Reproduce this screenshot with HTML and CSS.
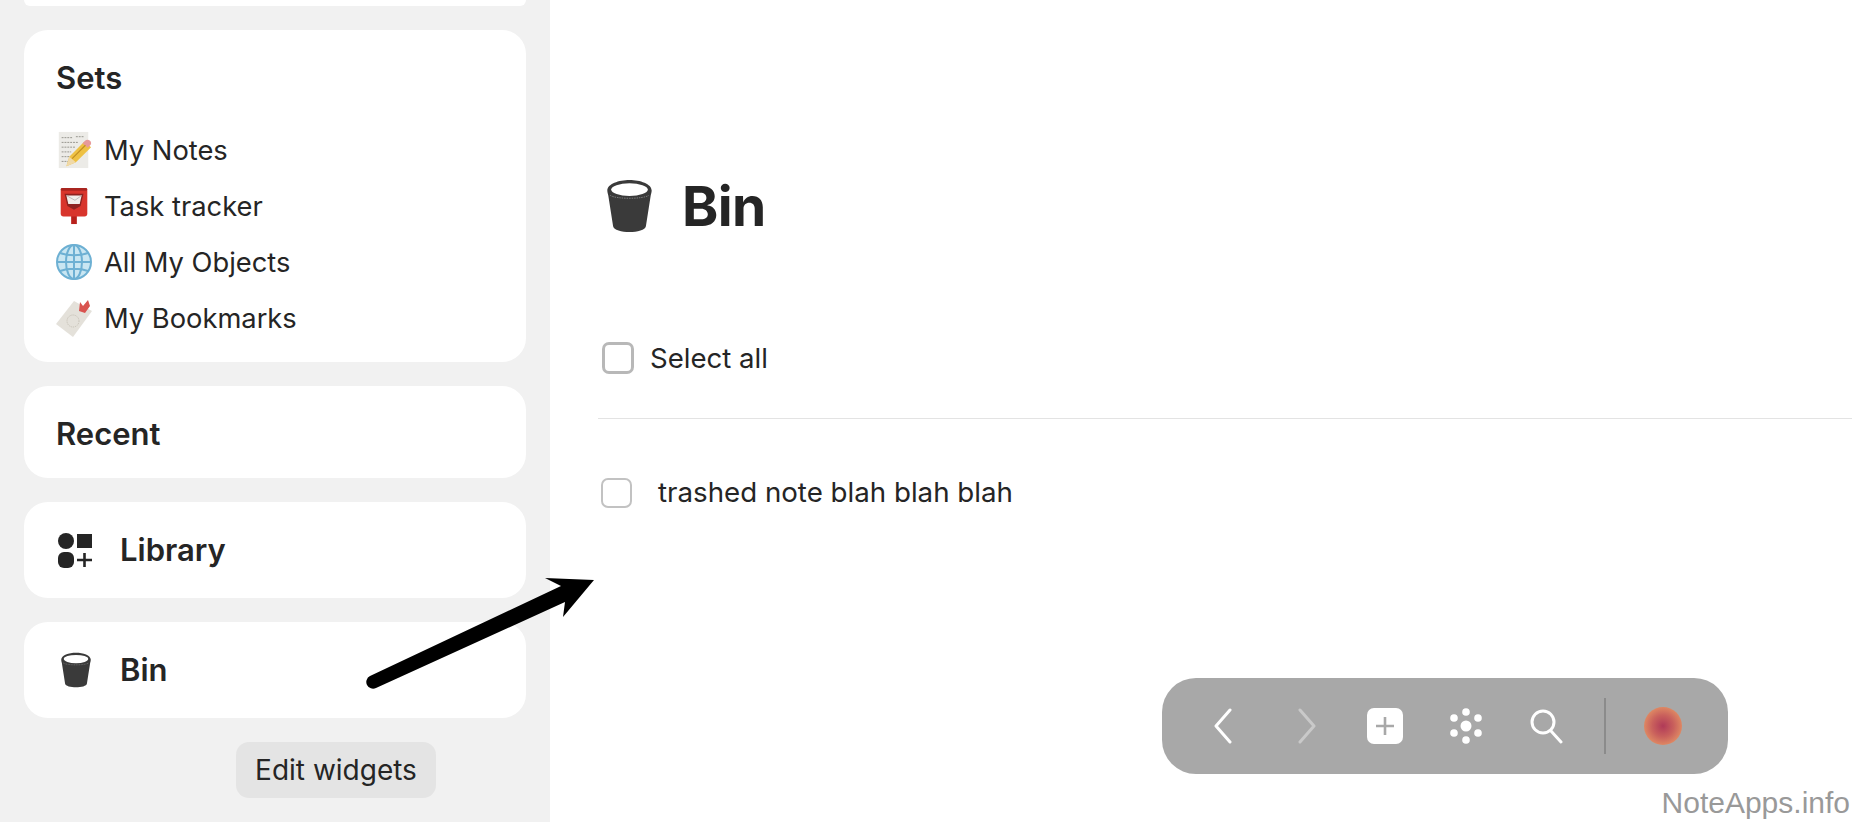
FILE: index.html
```html
<!DOCTYPE html>
<html lang="en">
<head>
<meta charset="utf-8">
<title>Bin</title>
<link rel="stylesheet" href="styles.css">
</head>
<body>
<svg class="defs" width="0" height="0" aria-hidden="true">
  <symbol id="bin" viewBox="0 0 48 56">
    <path d="M1 12C1 5 13 1 24 1s23 4 23 11c0 2-.6 3.500-1 5l-5 32c-.4 4-9 6-17 6S7.400 53 7 49L2 17c-.4-1.500-1-3-1-5z" fill="#3a3a3a"/>
    <ellipse cx="24" cy="11" rx="19" ry="6.500" fill="#fff"/>
    <path d="M4 17c6 4 34 4 40 0" fill="none" stroke="#9a9a9a" stroke-width=".7" stroke-dasharray="1.500 1"/>
  </symbol>
</svg>
<div class="app">
  <aside class="sidebar">
    <div class="card stub"></div>
    <section class="card sets">
      <h2 class="card-title sets-title">Sets</h2>
      <ul class="set-list">
        <li class="set-item">
          <svg class="emoji" viewBox="0 0 36 40">
            <rect x="2" y="1" width="31" height="38" fill="#ecebe7"/>
            <path d="M5 7h12M20 6h9M5 12h18M5 17h14M5 22h10M5 27h8M5 32h8" stroke="#8a8880" stroke-width=".9" stroke-dasharray="2 1" fill="none"/>
            <path d="M10 37l3-10 16-16 7 6-16 16z" fill="#eec143"/>
            <path d="M27 13l3-3c1-1 3-1 4.500 0s2 3 1 4.500l-3 3z" fill="#e79a9a"/>
            <path d="M10 37l3-10 7 6z" fill="#f0d9a8"/>
            <path d="M16 29l14-14" stroke="#c08d20" stroke-width="1.200"/>
          </svg>
          <span>My Notes</span>
        </li>
        <li class="set-item">
          <svg class="emoji" viewBox="0 0 36 40">
            <path d="M15 30h6v9h-6z" fill="#b8211c"/>
            <rect x="4" y="1" width="28" height="30" rx="3" fill="#d8352c"/>
            <rect x="4" y="1" width="28" height="3" rx="1.500" fill="#a92520"/>
            <path d="M8 7h20l-3 13-7 4-7-4z" fill="#8e2320"/>
            <path d="M10 9h16l-2 9H12z" fill="#f1eeea"/>
            <path d="M10 9l9 5 7-5" fill="none" stroke="#bbb" stroke-width="1"/>
          </svg>
          <span>Task tracker</span>
        </li>
        <li class="set-item">
          <svg class="emoji" viewBox="0 0 36 36">
            <circle cx="18" cy="18" r="17" fill="#c9e6f2"/>
            <g fill="none" stroke="#6db0d3" stroke-width="2">
              <circle cx="18" cy="18" r="17"/>
              <ellipse cx="18" cy="18" rx="8" ry="17"/>
              <path d="M18 1v34M1 18h34M4 9c8 3 20 3 28 0M4 27c8-3 20-3 28 0"/>
            </g>
          </svg>
          <span>All My Objects</span>
        </li>
        <li class="set-item">
          <svg class="emoji" viewBox="0 0 36 38">
            <path d="M18 2L36 12 17 38 0 25z" fill="#e4e1da"/>
            <circle cx="17" cy="22" r="6" fill="none" stroke="#c3beb2" stroke-width="1" stroke-dasharray="1 1"/>
            <path d="M23 12l1-9 3 4 5-6 2 6-5 7z" fill="#d9534f"/>
          </svg>
          <span>My Bookmarks</span>
        </li>
      </ul>
    </section>
    <section class="card row-card recent">
      <h2 class="card-title">Recent</h2>
    </section>
    <section class="card row-card library">
      <svg class="widget-icon" viewBox="0 0 35 35">
        <circle cx="8" cy="8" r="8" fill="#252525"/>
        <rect x="19" y="1" width="15" height="14" fill="#252525"/>
        <rect x="0" y="19" width="16" height="16" rx="6" fill="#252525"/>
        <path d="M26.500 20v14M19 27h15" stroke="#252525" stroke-width="2.600" fill="none"/>
      </svg>
      <h2 class="card-title">Library</h2>
    </section>
    <section class="card row-card trash">
      <svg class="widget-icon bin-small"><use href="#bin"/></svg>
      <h2 class="card-title">Bin</h2>
    </section>
    <button class="edit-btn" type="button">Edit widgets</button>
  </aside>
  <main class="content">
    <header class="page-head">
      <svg class="page-icon"><use href="#bin"/></svg>
      <h1 class="page-title">Bin</h1>
    </header>
    <div class="select-row">
      <span class="check check-strong"></span>
      <span>Select all</span>
    </div>
    <div class="note-row">
      <span class="check"></span>
      <span class="note-label">trashed note blah blah blah</span>
    </div>
  </main>
</div>
<svg class="arrow" viewBox="0 0 240 140" aria-hidden="true">
  <path d="M10 116L201 26 185 18 234 20 203 57 205 42 16 128A6.500 6.500 0 0 1 10 116z" fill="#000"/>
</svg>
<nav class="toolbar">
  <button class="tool" type="button" aria-label="Back">
    <svg viewBox="0 0 20 36" width="20" height="36"><path d="M17 2L3 18l14 16" fill="none" stroke="#fff" stroke-width="3" stroke-linecap="round" stroke-linejoin="round"/></svg>
  </button>
  <button class="tool" type="button" aria-label="Forward">
    <svg viewBox="0 0 20 36" width="20" height="36"><path d="M3 2l14 16L3 34" fill="none" stroke="#c9c9c9" stroke-width="3" stroke-linecap="round" stroke-linejoin="round"/></svg>
  </button>
  <button class="tool" type="button" aria-label="New">
    <svg viewBox="0 0 36 36" width="36" height="36"><rect width="36" height="36" rx="7" fill="#fff"/><path d="M18 9v18M9 18h18" stroke="#a8a8a8" stroke-width="2.600"/></svg>
  </button>
  <button class="tool" type="button" aria-label="Graph">
    <svg viewBox="0 0 36 36" width="36" height="36" fill="#fff"><circle cx="18" cy="18" r="5.500"/><circle cx="18" cy="4" r="3.800"/><circle cx="18" cy="32" r="3.800"/><circle cx="6" cy="10" r="3.800"/><circle cx="30" cy="10" r="3.800"/><circle cx="6" cy="25" r="3.800"/><circle cx="30" cy="25" r="3.800"/></svg>
  </button>
  <button class="tool" type="button" aria-label="Search">
    <svg viewBox="0 0 36 36" width="36" height="36"><circle cx="15" cy="14" r="11" fill="none" stroke="#fff" stroke-width="3"/><path d="M23 23l10 11" stroke="#fff" stroke-width="3" stroke-linecap="round"/></svg>
  </button>
  <span class="tool-sep"></span>
  <span class="avatar"></span>
</nav>
<div class="watermark">NoteApps.info</div>
</body>
</html>
```
FILE: styles.css
```css
* { box-sizing: border-box; }
html, body { margin: 0; height: 100%; overflow: hidden; }
body { font-family: Inter, "Liberation Sans", sans-serif; color: #252525; background: #fff; position: relative; }
.defs { position: absolute; }
.app { display: flex; height: 822px; }

.sidebar { width: 550px; flex: none; background: #f1f1f1; padding: 0 24px; display: flex; flex-direction: column; gap: 24px; }
.card { background: #fff; border-radius: 24px; }
.stub { height: 6px; border-radius: 0 0 24px 24px; }
.sets { height: 332px; padding: 31px 32px 0; }
.card-title { margin: 0; font-size: 31px; line-height: 34px; font-weight: 600; }
.sets-title { margin-bottom: 27px; }
.set-list { list-style: none; margin: 0; padding: 0; }
.set-item { height: 56px; display: flex; align-items: center; gap: 12px; font-size: 27.3px; }
.emoji { width: 36px; height: 38px; flex: none; }

.row-card { display: flex; align-items: center; padding: 0 32px; }
.recent { height: 92px; padding-top: 4px; }
.library { height: 96px; padding-left: 34px; gap: 27px; }
.trash { height: 96px; padding-left: 36px; gap: 28px; }
.widget-icon { width: 35px; height: 35px; flex: none; }
.bin-small { width: 32px; height: 36px; }

.edit-btn { width: 200px; height: 56px; margin: 0 0 0 212px; border: 0; border-radius: 13px; background: #e4e4e4; color: #252525; font: 400 28px Inter, sans-serif; padding: 0; }

.content { flex: 1; padding-top: 176px; padding-left: 48px; }
.page-head { display: flex; align-items: center; height: 60px; padding-left: 8px; gap: 29px; }
.page-icon { width: 47px; height: 54px; flex: none; }
.page-title { margin: 0; font-size: 55px; line-height: 60px; font-weight: 700; letter-spacing: -.7px; }
.select-row { height: 183px; padding: 106px 0 0 4px; display: flex; align-items: flex-start; gap: 16px; font-size: 27.6px; line-height: 32px; border-bottom: 1px solid #e3e3e3; }
.note-row { margin-top: 59px; padding-left: 3px; display: flex; align-items: center; gap: 26px; font-size: 27.7px; line-height: 30px; }
.note-label { margin-top: -2px; }
.check { width: 31px; height: 30px; flex: none; border: 2px solid #c2c2c2; border-radius: 7px; background: #fff; }
.check-strong { width: 32px; height: 32px; border: 3px solid #b8b8b8; }

.arrow { position: absolute; left: 360px; top: 560px; width: 240px; height: 140px; }

.toolbar { position: absolute; left: 1162px; top: 678px; width: 566px; height: 96px; border-radius: 34px; background: #a8a8a8; display: grid; grid-template-columns: 84px 84px 72px 90px 70px 48px 68px; justify-items: center; align-items: center; padding-left: 19px; }
.tool { border: 0; background: none; padding: 0; width: 36px; height: 36px; display: flex; align-items: center; justify-content: center; }
.tool-sep { width: 2px; height: 56px; background: #8b8b8b; }
.avatar { width: 38px; height: 38px; border-radius: 50%; background: radial-gradient(circle, #b03a58 0%, #c9605c 40%, #e89a66 85%, #eba06a 100%); }

.watermark { position: absolute; right: 2px; top: 785px; font: 400 30px "Liberation Sans", Arial, sans-serif; line-height: 36px; color: #999; }
```
